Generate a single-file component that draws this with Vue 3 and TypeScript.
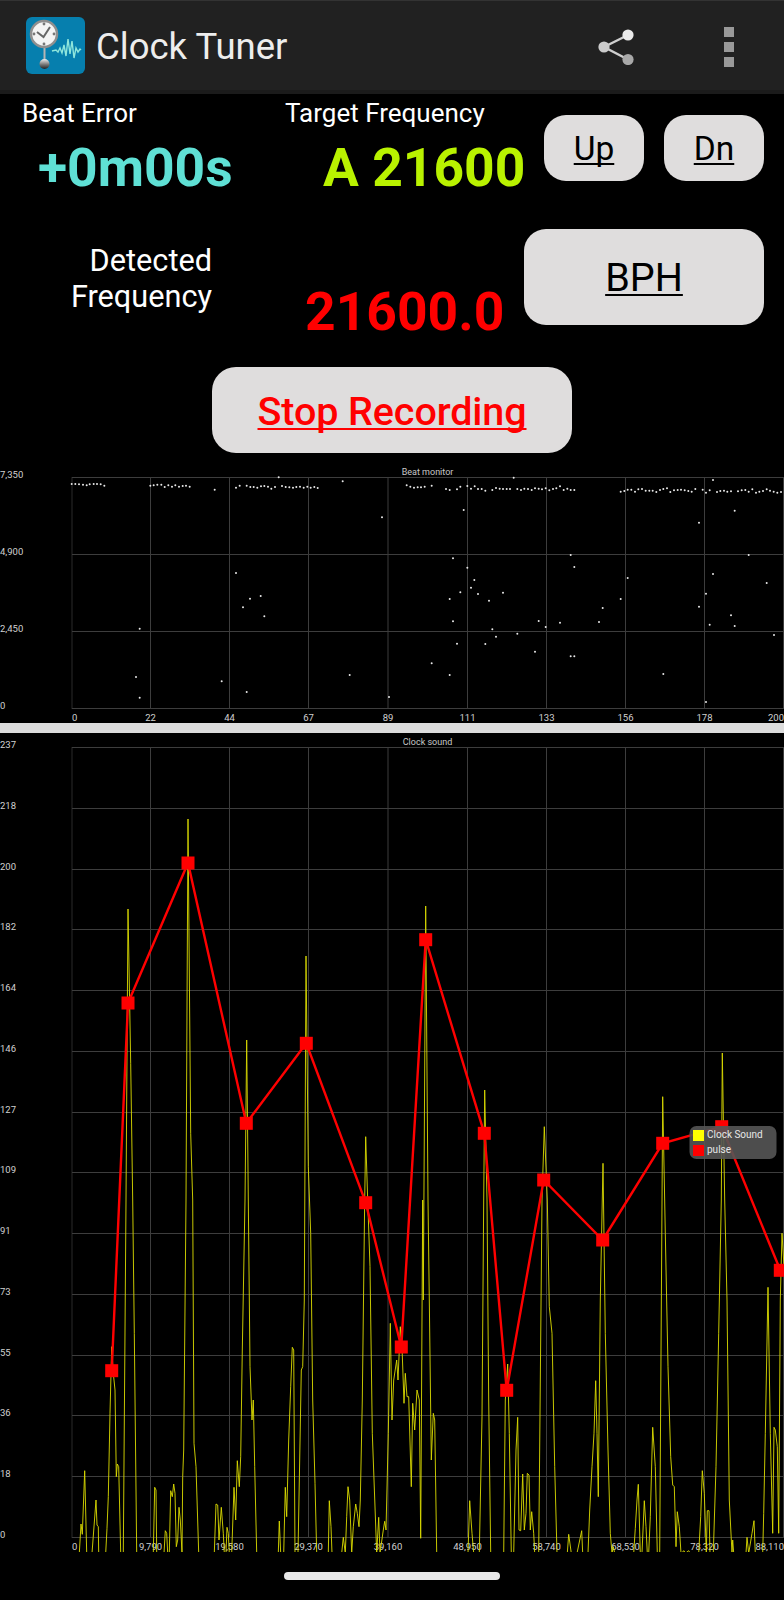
<script setup lang="ts">
type Pt = [number, number];

const gridX: number[] = [72, 150.5, 229.5, 308.5, 388, 467.5, 546.5, 625.5, 704.5, 783.5];

const beatGridY: number[] = [477.5, 554.5, 631.5, 708.5];
const soundGridY: number[] = Array.from({ length: 14 }, (_, i) => Math.round(747 + i * 60.77) + 0.5);

const beatYLabels = [
  { t: '7,350', y: 478 },
  { t: '4,900', y: 555 },
  { t: '2,450', y: 632 },
  { t: '0', y: 709 },
];
const beatXLabels = ['0', '22', '44', '67', '89', '111', '133', '156', '178', '200'];
const soundYLabels = ['237', '218', '200', '182', '164', '146', '127', '109', '91', '73', '55', '36', '18', '0'];
const soundXLabels = ['0', '9,790', '19,580', '29,370', '39,160', '48,950', '58,740', '68,530', '78,320', '88,110'];

function zoomed(list: number[], ox: number, oy: number): Pt[] {
  const out: Pt[] = [];
  for (let i = 0; i < list.length; i += 2) out.push([ox + list[i] / 3, oy + list[i + 1] / 3]);
  return out;
}

const dotsLeft = [
  215,72,226,72,237,73,249,74,260,76,269,73,281,72,291,72,302,73,313,77,
  451,77,461,76,472,74,484,74,494,81,505,76,516,80,526,76,537,80,548,78,558,77,569,80,
  644,89,708,83,719,77,740,77,751,81,761,81,772,83,783,79,793,78,804,80,814,86,825,81,
  846,78,857,81,868,82,879,83,889,81,900,80,911,83,922,80,932,83,943,81,953,84,
  836,52,1028,64,1146,172,708,339,782,408,750,416,729,442,793,469,419,506,408,651,665,664,740,696,419,713,1049,645,1167,711,
];
const dotsRight = [
  44,76,55,80,66,83,77,82,87,82,98,80,119,77,162,87,173,90,195,88,205,80,226,78,237,86,248,79,258,87,269,87,280,92,
  301,90,312,84,323,86,333,87,344,87,354,87,376,87,387,90,397,86,408,87,419,90,429,85,440,86,450,88,461,85,472,91,483,87,493,85,504,79,515,90,526,86,536,90,547,90,
  365,53,215,150,183,295,226,323,247,360,237,383,205,397,258,402,333,398,173,417,291,422,183,484,301,508,376,521,312,530,280,552,195,551,429,575,119,610,173,645,440,483,461,501,504,488,536,285,547,321,536,589,547,589,632,444,621,486,686,417,707,354,814,642,942,726,921,188,921,440,942,401,963,342,953,494,963,60,1017,466,1028,498,1028,152,1070,285,1124,369,1146,525,
  686,95,697,93,707,89,718,89,729,95,739,88,750,87,761,92,772,92,782,92,793,96,804,90,814,87,825,85,835,96,846,91,857,90,867,89,878,91,889,93,899,95,910,87,932,89,942,98,953,91,975,96,985,93,996,92,1006,95,1017,94,1038,94,1049,91,1060,90,1070,95,1081,88,1092,98,1102,95,1113,93,1124,88,1134,92,1145,95,1156,98,1167,96,
];
const dots: Pt[] = [...zoomed(dotsLeft, 0, 460), ...zoomed(dotsRight, 392, 460)];

const yellowA = [
  238,1060,243,972,247,1003,254,812,260,1060,276,1060,288,900,291,975,295,980,296,1060,317,1060,321,985,325,890,330,640,335,440,340,520,345,570,349,830,352,792,356,800,362,1060,
  370,1060,378,0,384,-873,392,-410,398,0,403,400,410,1060,460,1060,464,862,468,870,470,1060,492,1060,496,992,500,1000,503,1060,508,1060,512,872,517,890,521,852,525,880,529,1040,533,1020,537,922,541,960,546,1060,
  548,830,551,750,558,0,564,-1143,572,-200,578,0,582,730,588,800,596,1060,643,1060,648,912,653,915,657,1020,664,922,670,1000,673,1060,678,1060,681,982,685,1000,688,1060,695,1060,702,862,707,960,712,782,718,860,722,770,727,450,735,0,740,-480,745,0,750,500,756,660,760,600,764,800,770,1060,
  835,1060,838,963,842,1060,851,1060,856,862,860,950,866,720,872,560,877,442,881,450,885,1060,894,1060,904,510,908,500,913,300,918,-732,925,-100,932,100,938,600,945,850,950,1060,
  985,1060,988,902,993,980,996,1060,1025,1060,1030,1012,1036,1060,1040,950,1044,860,1049,900,1055,1060,1060,980,1067,912,1072,940,1077,980,1081,900,1087,600,1094,0,1097,-190,1103,0,1110,200,1117,700,1130,1060,1136,952,1140,1060,1150,990,1154,964,1158,990,1165,700,1171,370,
];
const yellowB = [
  0,660,5,540,14,480,18,540,25,380,30,440,36,610,40,520,45,590,50,590,58,860,62,610,68,690,75,570,82,600,86,1015,92,0,94,300,101,-882,108,0,112,300,118,780,124,640,128,660,134,1060,
  228,1060,233,902,240,1000,245,1060,262,1060,270,650,275,0,278,-330,285,0,290,600,296,1060,335,1060,340,600,347,492,352,700,358,1060,365,1060,372,750,377,652,381,990,386,992,392,822,397,990,402,940,406,820,411,825,415,990,419,935,425,1000,428,1060,
  440,1060,450,0,457,-220,466,0,472,320,480,400,488,800,495,1060,526,1060,530,1003,538,1060,555,1060,569,992,572,1060,588,1060,593,930,600,800,606,700,611,542,615,700,619,890,625,300,633,-110,640,400,648,750,655,1000,660,1060,664,1040,668,1060,
  725,1060,730,985,735,900,739,853,745,1060,750,1060,757,902,762,980,766,1060,770,1060,775,950,782,682,790,800,796,1060,803,1060,806,600,812,-310,820,100,828,500,836,770,842,855,847,860,852,1040,856,935,862,980,867,1060,876,1052,880,1060,890,1052,895,1060,
  920,1060,926,950,931,812,937,880,943,1060,946,932,951,932,954,1060,964,1060,972,800,980,400,988,0,991,-441,998,0,1005,300,1012,900,1020,1060,1022,1020,1025,1060,1062,1060,1065,1012,1070,1060,1080,1000,1086,962,1090,1060,1112,1060,1115,940,1120,700,1128,262,1135,700,1142,1000,1146,682,1150,690,1156,740,1160,1000,1165,300,1170,100,1176,200,
];
const toPoints = (pts: Pt[]): string => pts.map(([x, y]) => `${x.toFixed(1)},${y.toFixed(1)}`).join(' ');
const yellowLine = toPoints([...zoomed(yellowA, 0, 1200), ...zoomed(yellowB, 392, 1200)]);

const pulse: Pt[] = [
  [111.7, 1370.7], [128, 1003], [188, 863], [246.3, 1123.3], [306.3, 1043.3],
  [365.7, 1202.7], [401.3, 1347], [425.7, 939.7], [484.3, 1133.3], [506.7, 1390.3],
  [543.7, 1180], [602.7, 1240], [662.7, 1143.3], [721.7, 1126.7], [780.3, 1270.3],
];
const pulseLine = toPoints(pulse);
</script>

<template>
  <div class="screen">
    <header class="appbar">
      <svg class="logo" viewBox="0 0 60 58" width="60" height="58" aria-hidden="true">
        <defs>
          <linearGradient id="bob" x1="0" y1="0" x2="0" y2="1">
            <stop offset="0" stop-color="#eeeeee" />
            <stop offset="0.55" stop-color="#777777" />
            <stop offset="1" stop-color="#222222" />
          </linearGradient>
        </defs>
        <rect x="0" y="0" width="59" height="57" rx="6" fill="#067fae" />
        <line x1="18.5" y1="30" x2="18.5" y2="46" stroke="#b5b5b5" stroke-width="2" />
        <circle cx="18.5" cy="47" r="5" fill="url(#bob)" />
        <circle cx="18" cy="17" r="13" fill="#f4f4f4" stroke="#8f8f8f" stroke-width="2.5" />
        <path d="M11 15 L17.5 20 L24 10" fill="none" stroke="#666" stroke-width="2" />
        <circle cx="18" cy="7" r="1.4" fill="#777" />
        <circle cx="18" cy="27" r="1.4" fill="#777" />
        <circle cx="8" cy="17" r="1.4" fill="#777" />
        <circle cx="28" cy="17" r="1.4" fill="#777" />
        <polyline
          points="26,34 30,33 32,35 34,31 36,36 38,28 40,39 42,22 44,37 46,24 48,41 50,31 52,35 54,32 55,33"
          fill="none"
          stroke="#8fe6dc"
          stroke-width="1.4"
        />
      </svg>
      <h1 class="title">Clock Tuner</h1>
      <svg class="share" viewBox="0 0 36 36" width="36" height="36" aria-hidden="true">
        <path d="M30 6 L6 18 L30 30.5" fill="none" stroke="#cfcfcf" stroke-width="2.4" />
        <circle cx="30" cy="6" r="5.6" fill="#eaeaea" />
        <circle cx="6" cy="18" r="5.6" fill="#cccccc" />
        <circle cx="30" cy="30.5" r="5.6" fill="#a8a8a8" />
      </svg>
      <div class="overflow">
        <span></span><span></span><span></span>
      </div>
    </header>

    <section class="controls">
      <div class="row-target">
        <div class="beat">
          <div class="label">Beat Error</div>
          <div class="big beat-value">+0m00s</div>
        </div>
        <div class="target">
          <div class="label">Target Frequency</div>
          <div class="big target-value">A 21600</div>
        </div>
        <button class="btn small-btn">Up</button>
        <button class="btn small-btn">Dn</button>
      </div>
      <div class="row-detected">
        <div class="detected-label">Detected<br />Frequency</div>
        <div class="big detected-value">21600.0</div>
        <button class="btn bph">BPH</button>
      </div>
      <div class="row-stop">
        <button class="btn stop">Stop Recording</button>
      </div>
    </section>

    <svg class="chart" viewBox="0 460 784 263" width="784" height="263">
      <g class="grid">
        <line v-for="(x, i) in gridX" :key="x" :class="{ edge: i === 0 }" :x1="x" :x2="x" y1="477" y2="709" />
        <line v-for="y in beatGridY" :key="y" x1="72" x2="784" :y1="y" :y2="y" />
      </g>
      <text class="axis title-text" x="427.5" y="474.5" text-anchor="middle">Beat monitor</text>
      <text v-for="l in beatYLabels" :key="l.t" class="axis" x="0" :y="l.y">{{ l.t }}</text>
      <text
        v-for="(l, i) in beatXLabels"
        :key="l"
        class="axis"
        :x="i === 0 ? 72 : i === 9 ? 784 : gridX[i]"
        y="720.5"
        :text-anchor="i === 0 ? 'start' : i === 9 ? 'end' : 'middle'"
      >{{ l }}</text>
      <circle v-for="(d, i) in dots" :key="i" class="dot" :cx="d[0]" :cy="d[1]" r="1" />
    </svg>

    <div class="divider"></div>

    <svg class="chart" viewBox="0 733 784 867" width="784" height="867">
      <defs>
        <clipPath id="plotClip">
          <rect x="72" y="733" width="712" height="819" />
        </clipPath>
      </defs>
      <g class="grid">
        <line v-for="(x, i) in gridX" :key="x" :class="{ edge: i === 0 }" :x1="x" :x2="x" y1="747" y2="1538" />
        <line v-for="y in soundGridY" :key="y" x1="72" x2="784" :y1="y" :y2="y" />
      </g>
      <text class="axis title-text" x="427.5" y="745" text-anchor="middle">Clock sound</text>
      <text
        v-for="(l, i) in soundYLabels"
        :key="l"
        class="axis"
        x="0"
        :y="soundGridY[i]"
      >{{ l }}</text>
      <text
        v-for="(l, i) in soundXLabels"
        :key="l"
        class="axis"
        :x="i === 0 ? 72 : i === 9 ? 784 : gridX[i]"
        y="1549.5"
        :text-anchor="i === 0 ? 'start' : i === 9 ? 'end' : 'middle'"
      >{{ l }}</text>
      <polyline class="sound" clip-path="url(#plotClip)" :points="yellowLine" />
      <polyline class="pulse" :points="pulseLine" />
      <rect
        v-for="(p, i) in pulse"
        :key="i"
        class="marker"
        :x="p[0] - 6.5"
        :y="p[1] - 6.5"
        width="13"
        height="13"
      />
      <g>
        <rect x="689.5" y="1126" width="87" height="33" rx="7" class="legend-bg" />
        <rect x="693" y="1130" width="11" height="11" fill="#ffff00" />
        <rect x="693" y="1145" width="11" height="11" fill="#ff0000" />
        <text class="legend-text" x="707" y="1137.5">Clock Sound</text>
        <text class="legend-text" x="707" y="1152.5">pulse</text>
      </g>
    </svg>

    <div class="nav-pill"></div>
  </div>
</template>

<style scoped>
.screen {
  position: relative;
  width: 784px;
  height: 1600px;
  overflow: hidden;
  background: #000;
  font-family: Roboto, "Liberation Sans", sans-serif;
  color: #fff;
}
.appbar {
  box-sizing: border-box;
  height: 94px;
  display: flex;
  align-items: center;
  background: #212121;
  border-top: 1px solid #333;
  border-bottom: 4px solid #1b1b1b;
  padding: 2px 0 0 26px;
}
.logo {
  flex: none;
  margin-bottom: 2px;
}
.title {
  margin: 0 0 0 10px;
  font-size: 36.5px;
  font-weight: 400;
  color: #ededed;
  flex: 1;
}
.share {
  flex: none;
  margin-right: 90px;
}
.overflow {
  display: flex;
  flex-direction: column;
  gap: 5px;
  margin-right: 50px;
}
.overflow span {
  width: 10px;
  height: 10px;
  background: #999;
}
.controls {
  height: 366px;
}
.row-target {
  height: 135px;
  display: flex;
  align-items: flex-start;
}
.beat {
  width: 263px;
  padding-left: 22px;
  box-sizing: content-box;
}
.target {
  width: 259px;
}
.label {
  font-size: 26px;
  line-height: 32px;
  margin-top: 3px;
}
.big {
  font-size: 53.4px;
  font-weight: 700;
  line-height: 60px;
}
.beat-value {
  color: #5fe0d5;
  margin: 9px 0 0 16px;
}
.target-value {
  color: #b9f200;
  margin: 9px 0 0 38px;
}
.btn {
  border: none;
  padding: 0;
  background: #dfdddd;
  color: #000;
  font-family: inherit;
  text-decoration: underline;
  text-decoration-thickness: 2px;
  text-decoration-skip-ink: none;
  text-underline-offset: 3px;
}
.small-btn {
  width: 100px;
  height: 66px;
  margin-top: 21px;
  margin-right: 20px;
  border-radius: 22px;
  font-size: 33.5px;
}
.row-detected {
  height: 96px;
  display: flex;
  align-items: flex-start;
}
.detected-label {
  width: 212px;
  text-align: right;
  font-size: 30.7px;
  line-height: 36px;
  margin-top: 14px;
}
.detected-value {
  color: #ff0000;
  width: 219px;
  padding-left: 93px;
  box-sizing: content-box;
  margin-top: 53px;
  white-space: nowrap;
}
.bph {
  width: 240px;
  height: 96px;
  border-radius: 22px;
  font-size: 39.5px;
}
.row-stop {
  margin-top: 42px;
  display: flex;
  justify-content: center;
}
.stop {
  width: 360px;
  height: 86px;
  padding-top: 3px;
  border-radius: 24px;
  color: #ff0000;
  font-size: 39.5px;
  font-weight: 500;
  letter-spacing: -0.1px;
}
.chart {
  display: block;
}
.divider {
  height: 10px;
  background: #dcdcdc;
}
.grid line {
  stroke: #3d3d3d;
  stroke-width: 1;
}
.grid line.edge {
  stroke: #2a2a2a;
}
.axis {
  font-family: Roboto, "Liberation Sans", sans-serif;
  font-size: 9.5px;
  fill: #d0d0d0;
}
.title-text {
  font-size: 9px;
  fill: #c8c8c8;
}
.dot {
  fill: #e8e8e8;
}
.sound {
  fill: none;
  stroke: #dcdc00;
  stroke-width: 0.9;
}
.pulse {
  fill: none;
  stroke: #ff0000;
  stroke-width: 2.4;
}
.marker {
  fill: #ff0000;
}
.legend-bg {
  fill: #555555;
  fill-opacity: 0.9;
}
.legend-text {
  font-family: Roboto, "Liberation Sans", sans-serif;
  font-size: 10px;
  fill: #e6e6e6;
}
.nav-pill {
  position: absolute;
  left: 284px;
  top: 1572px;
  width: 216px;
  height: 8px;
  border-radius: 4px;
  background: #e8e8e8;
}
</style>

<style>
html,
body {
  background: #000;
}
</style>
